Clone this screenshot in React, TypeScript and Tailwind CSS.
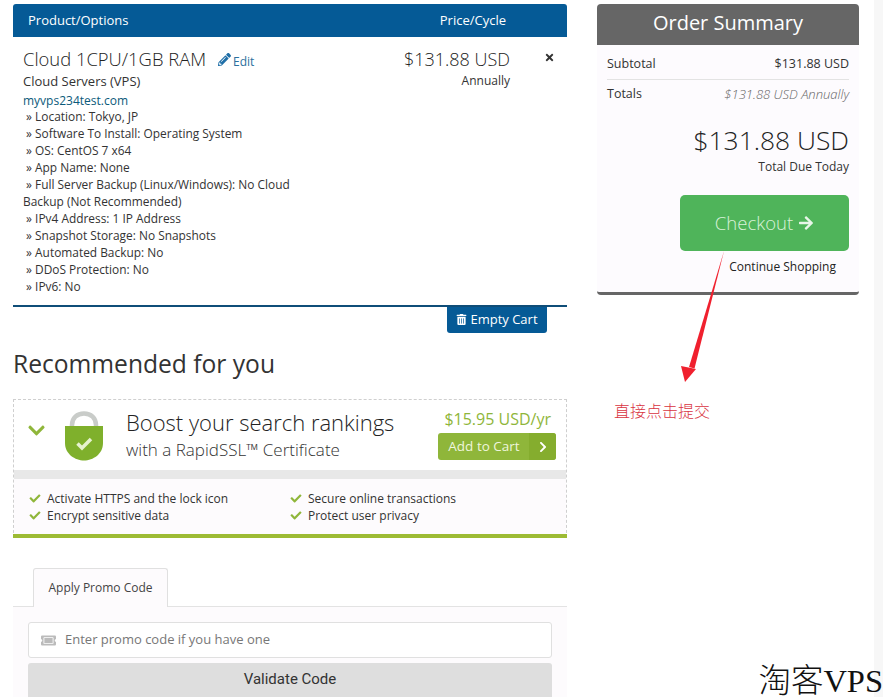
import { FaArrowRight, FaCheck, FaChevronDown, FaChevronRight, FaPencilAlt, FaTicketAlt, FaTimes, FaTrashAlt } from 'react-icons/fa'

const OPTIONS = [
  'Location: Tokyo, JP',
  'Software To Install: Operating System',
  'OS: CentOS 7 x64',
  'App Name: None',
  'Full Server Backup (Linux/Windows): No Cloud Backup (Not Recommended)',
  'IPv4 Address: 1 IP Address',
  'Snapshot Storage: No Snapshots',
  'Automated Backup: No',
  'DDoS Protection: No',
  'IPv6: No',
]

function Benefit({ text }: { text: string }) {
  return (
    <div className="flex items-center h-[17px]">
      <FaCheck className="text-[#8fb63a] text-[11px] w-[18px] pr-[6px]" />
      <span>{text}</span>
    </div>
  )
}

function CartPanel() {
  return (
    <div>
      <div className="flex items-center justify-between h-[33px] bg-[#055a96] rounded-t-[3px] pl-[15px] pr-[61px] text-[13px] text-white">
        <span>Product/Options</span>
        <span>Price/Cycle</span>
      </div>
      <div className="relative h-[270px] border-b-2 border-[#0f4d78] pl-[10px] pt-[9px] text-[11.900px] leading-[17px] text-[#333]">
        <div className="flex items-baseline h-[26px]">
          <span className="text-[18.400px] leading-[26px] font-light text-[#222]">Cloud 1CPU/1GB RAM</span>
          <FaPencilAlt className="ml-[12px] mr-[2px] text-[13px] text-[#1f6fa8] self-center" />
          <span className="text-[12px] text-[#2a6f9e]">Edit</span>
        </div>
        <div className="text-[13px] leading-[18px]">Cloud Servers (VPS)</div>
        <div className="text-[12px] text-[#0b5a7a] leading-[18px] mt-[2px]">myvps234test.com</div>
        <div className="w-[280px] -mt-[2px]">
          {OPTIONS.map((o) => (
            <div key={o}>&nbsp;» {o}</div>
          ))}
        </div>
        <div className="absolute right-[57px] top-[9px] text-right">
          <div className="text-[18px] leading-[26px] font-light text-[#222]">$131.88 USD</div>
          <div className="text-[12px] leading-[18px]">Annually</div>
        </div>
        <FaTimes className="absolute right-[12px] top-[15px] text-[11px] text-[#333]" />
      </div>
      <div className="flex justify-end pr-[20px]">
        <button className="flex items-center gap-[3px] h-[28px] w-[100px] -mt-[2px] pt-[1px] justify-center bg-[#055a96] rounded-b-[3px] text-[13px] text-white">
          <FaTrashAlt className="text-[11px]" />
          Empty Cart
        </button>
      </div>
    </div>
  )
}

function LockIcon() {
  return (
    <svg width="38" height="50" viewBox="0 0 38 50">
      <path d="M7 18V14C7 7 12 2.500 19 2.500S31 7 31 14v4" fill="none" stroke="#c9ccc9" strokeWidth="4.500" />
      <path d="M0 15h38V32C38 43 28 49.500 19 49.500S0 43 0 32z" fill="#7fb02c" />
      <path d="M12.500 32.500l4.500 4.500 9-9" fill="none" stroke="#e6f2cf" strokeWidth="3.500" />
    </svg>
  )
}

function Upsell() {
  return (
    <div className="border border-dashed border-[#cfcfcf] border-b-0">
      <div className="flex h-[70px] bg-white">
        <FaChevronDown className="ml-[13px] mt-[21px] text-[19px] text-[#8fb63a]" />
        <div className="ml-[19px] mt-[11px]">
          <LockIcon />
        </div>
        <div className="ml-[23px] mt-[7px]">
          <div className="text-[22px] leading-[30px] font-light text-[#222]">Boost your search rankings</div>
          <div className="text-[17px] leading-[24px] mt-[1px] font-light text-[#333]">with a RapidSSL™ Certificate</div>
        </div>
        <div className="ml-auto mr-[10px] mt-[7px] w-[118px]">
          <div className="text-[16px] leading-[24px] text-right text-[#8fb63a] mr-[5px] whitespace-nowrap">$15.95 USD/yr</div>
          <button className="flex items-center h-[27px] w-full mt-[2px] bg-[#8fb63a] rounded-[3px] text-[13.500px] text-[#eef5dd]">
            <span className="flex-1 text-center pl-[1px]">Add to Cart</span>
            <span className="flex items-center justify-center w-[27px] h-full bg-[#85ad2e] rounded-r-[3px]">
              <FaChevronRight className="text-[12px] text-white" />
            </span>
          </button>
        </div>
      </div>
      <div className="h-[9px] bg-[#e8e8e8]" />
      <div className="grid grid-cols-[261px_1fr] h-[55px] bg-[#fdfbfd] pl-[15px] pt-[11px] text-[12px] text-[#333]">
        <div>
          <Benefit text="Activate HTTPS and the lock icon" />
          <Benefit text="Encrypt sensitive data" />
        </div>
        <div>
          <Benefit text="Secure online transactions" />
          <Benefit text="Protect user privacy" />
        </div>
      </div>
      <div className="h-[4px] -mx-px bg-[#9dbb34]" />
    </div>
  )
}

function PromoTabs() {
  return (
    <div className="mt-[30px]">
      <div className="border-b border-[#e3e3e3] pl-[20px] h-[39px]">
        <div className="flex items-center justify-center w-[135px] h-[39px] border border-b-0 border-[#e0e0e0] rounded-t-[3px] bg-[#fdfbfd] text-[12px] text-[#444]">
          Apply Promo Code
        </div>
      </div>
      <div className="bg-[#fdfbfd] px-[15px] pt-[15px]">
        <div className="flex items-center h-[36px] bg-white border border-[#e0e0e0] rounded-[3px] pl-[12px] text-[13px] text-[#777]">
          <FaTicketAlt className="text-[15px] text-[#bbb] mr-[9px]" />
          Enter promo code if you have one
        </div>
        <button className="block w-full h-[34px] mt-[5px] pb-[2px] bg-[#dedede] rounded-t-[3px] text-[15px] text-[#333] font-['Roboto',sans-serif]">
          Validate Code
        </button>
      </div>
    </div>
  )
}

function OrderSummary() {
  return (
    <div className="rounded-[4px] bg-[#fdfbfe] border-b-[3px] border-[#666] h-[291px]">
      <div className="h-[41px] bg-[#666] rounded-t-[4px] text-center text-[20px] leading-[38px] text-white">Order Summary</div>
      <div className="px-[10px] text-[12px] text-[#333]">
        <div className="flex items-center justify-between h-[35px] pt-[5px] border-b border-[#e3e3e3] text-[12.500px]">
          <span>Subtotal</span>
          <span>$131.88 USD</span>
        </div>
        <div className="flex items-center justify-between h-[27px] pt-[2px] text-[12.500px]">
          <span>Totals</span>
          <span className="italic font-light text-[13px] text-[#666]">$131.88 USD Annually</span>
        </div>
        <div className="text-right text-[26.400px] leading-[32px] mt-[17px] font-light text-[#222]">$131.88 USD</div>
        <div className="text-right leading-[18px] mt-[2px]">Total Due Today</div>
        <div className="flex justify-end mt-[19px]">
          <button className="flex items-center justify-center gap-[5px] w-[169px] h-[56px] bg-[#4fb45a] rounded-[5px] text-[18.500px] font-light text-[#d9f2d9]">
            Checkout
            <FaArrowRight className="text-[16px] text-[#e8f6e8]" />
          </button>
        </div>
        <div className="text-right pr-[13px] leading-[18px] mt-[7px] text-[#222]">Continue Shopping</div>
      </div>
    </div>
  )
}

export default function App() {
  return (
    <div className="relative h-[697px] w-[883px] overflow-hidden bg-white font-['Open_Sans',sans-serif]">
      <div className="flex pt-[4px] pl-[13px] h-full">
        <div className="w-[554px] shrink-0">
          <CartPanel />
          <h2 className="text-[24.600px] leading-[32px] text-[#333] mt-[15px] mb-[19px]">Recommended for you</h2>
          <Upsell />
          <PromoTabs />
        </div>
        <div className="w-[262px] ml-[30px] shrink-0">
          <OrderSummary />
        </div>
        <div className="w-[9px] ml-[15px] bg-[#f7f7f7] shrink-0 -mt-[4px]" />
      </div>

      {/* annotation drawn over the screenshot */}
      <svg className="absolute left-[670px] top-[245px]" width="65" height="140" viewBox="0 0 65 140">
        <path d="M54 6L19 122l5.500 1.500z" fill="#f0202e" />
        <path d="M15 137L11 121l15 3z" fill="#f0202e" />
      </svg>
      <div className="absolute left-[614px] top-[400px] text-[16px] leading-[20px] text-[#d9333f] font-['Noto_Sans_CJK_SC',sans-serif] font-light">直接点击提交</div>
      <div className="absolute right-0 top-[661px] text-[32.500px] leading-[40px] text-[#111] font-['Liberation_Serif','Noto_Sans_CJK_SC',serif] font-light whitespace-nowrap">淘客VPS</div>
    </div>
  )
}
